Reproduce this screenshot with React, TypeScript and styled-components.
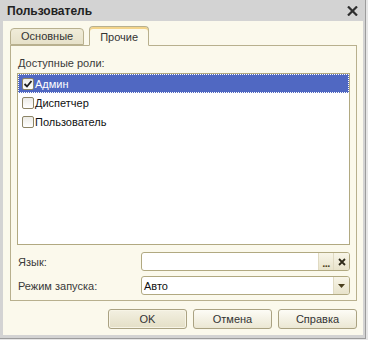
import React from 'react';
import styled, { createGlobalStyle } from 'styled-components';

const Global = createGlobalStyle`
  html, body { margin: 0; padding: 0; background: #ffffff; }
  body { font-family: "Liberation Sans", Arial, sans-serif; font-size: 11px; color: #222; }
`;

const Window = styled.div`
  width: 368px;
  height: 340px;
  box-sizing: border-box;
  display: flex;
  flex-direction: column;
  background: #d3d3d3;
  padding: 0 5px 5px 3px;
  box-shadow: inset -2px -1px 0 #e6e6e6, inset -3px -2px 0 #9c9c9c;
`;

const TitleBar = styled.div`
  height: 21px;
  flex: none;
  display: flex;
  align-items: center;
  justify-content: space-between;
  padding: 0 5px 0 4px;
`;

const Title = styled.span`
  font-weight: bold;
  font-size: 12px;
  color: #222;
`;

const Content = styled.div`
  flex: 1;
  min-height: 0;
  background: #fbf9ec;
  display: flex;
  flex-direction: column;
  padding: 5px 6px 6px 7px;
`;

const TabStrip = styled.div`
  height: 19px;
  flex: none;
  display: flex;
  align-items: flex-end;
  gap: 5px;
`;

const Tab = styled.div<{ $active?: boolean }>`
  box-sizing: border-box;
  height: ${p => (p.$active ? '20px' : '17px')};
  padding: 0 10px;
  display: flex;
  align-items: center;
  justify-content: center;
  border: 1px solid #b8b08e;
  border-bottom: ${p => (p.$active ? '1px solid #fbf9ec' : '1px solid #b8b08e')};
  border-radius: 4px 4px 0 0;
  background: ${p => (p.$active ? '#fbf9ec' : 'linear-gradient(#f0ecd9, #e6e1c9)')};
  box-shadow: ${p => (p.$active ? 'inset 0 2px 0 #f3d48a' : 'none')};
  color: #333;
  margin-bottom: ${p => (p.$active ? '-1px' : '0')};
  position: relative;
  z-index: ${p => (p.$active ? 1 : 0)};
  line-height: 1;
  padding-top: ${p => (p.$active ? '2px' : '0')};
`;

const Panel = styled.div`
  flex: 1;
  min-height: 0;
  border: 1px solid #b8b08e;
  display: flex;
  flex-direction: column;
  padding: 9px 6px 5px 6px;
`;

const SectionLabel = styled.div`
  line-height: 17px;
  color: #3a3a3a;
  padding-left: 1px;
`;

const List = styled.div`
  flex: 1;
  min-height: 0;
  margin-top: 1px;
  background: #ffffff;
  border: 1px solid #b1a981;
  display: flex;
  flex-direction: column;
`;

const Row = styled.div<{ $selected?: boolean }>`
  height: 19px;
  box-sizing: border-box;
  display: flex;
  align-items: center;
  gap: 1px;
  padding-left: 4px;
  background: ${p => (p.$selected ? '#5068c2' : 'transparent')};
  color: ${p => (p.$selected ? '#ffffff' : '#111111')};
  outline: ${p => (p.$selected ? '1px dotted #ffffff' : 'none')};
  outline-offset: -1px;
`;

const Box = styled.span`
  width: 12px;
  height: 12px;
  box-sizing: border-box;
  border: 1px solid #8c8466;
  border-radius: 2px;
  background: linear-gradient(#ecebe6, #ffffff);
  display: flex;
  align-items: center;
  justify-content: center;
  flex: none;
`;

const FormGrid = styled.div`
  margin-top: 7px;
  display: grid;
  grid-template-columns: 124px 1fr;
  row-gap: 5px;
  align-items: center;
`;

const FieldLabel = styled.span`
  color: #3a3a3a;
  padding-left: 1px;
`;

const Field = styled.div`
  height: 19px;
  box-sizing: border-box;
  border: 1px solid #b1a981;
  border-radius: 3px;
  background: #ffffff;
  display: flex;
  overflow: hidden;
`;

const FieldText = styled.span`
  flex: 1;
  padding-left: 2px;
  display: flex;
  align-items: center;
  color: #111;
`;

const FieldButton = styled.span<{ $w: number }>`
  width: ${p => p.$w}px;
  flex: none;
  display: flex;
  align-items: center;
  justify-content: center;
  background: linear-gradient(#f8f5e8, #e8e3cb);
  border-left: 1px solid #e0dac2;
  color: #4d4422;
`;

const Dots = styled.span`
  font-weight: bold;
  font-size: 11px;
  letter-spacing: -0.5px;
  line-height: 1;
  padding-top: 4px;
`;

const ButtonRow = styled.div`
  flex: none;
  margin-top: 8px;
  display: flex;
  justify-content: flex-end;
  gap: 6px;
`;

const Button = styled.button<{ $default?: boolean }>`
  width: 79px;
  height: 20px;
  box-sizing: border-box;
  border: 1px solid #aaa282;
  border-radius: 3px;
  background: ${p => (p.$default ? 'linear-gradient(#f3f0e1, #e4dfc6)' : 'linear-gradient(#fdfcf6, #ebe7d3)')};
  box-shadow: ${p => (p.$default ? 'inset 0 0 0 1px #f7f4e6' : 'none')};
  font-family: "Liberation Sans", Arial, sans-serif;
  font-size: 11px;
  color: #333;
  padding: 0;
`;

const CloseIcon = () => (
  <svg width="11" height="10" viewBox="0 0 11 10">
    <path d="M1 0.5 L10 9.5 M10 0.5 L1 9.5" stroke="#2e2e2e" strokeWidth="2.2" />
  </svg>
);

const Check = () => (
  <svg width="10" height="10" viewBox="0 0 10 10">
    <path d="M1.5 5 L4 7.5 L8.5 2" stroke="#1e1e1e" strokeWidth="1.8" fill="none" />
  </svg>
);

const Cross = () => (
  <svg width="8" height="8" viewBox="0 0 8 8">
    <path d="M1 1 L7 7 M7 1 L1 7" stroke="#2e2a1a" strokeWidth="1.8" />
  </svg>
);

const Arrow = () => (
  <svg width="7" height="4" viewBox="0 0 7 4">
    <polygon points="0,0 7,0 3.5,4" fill="#4a3f1e" />
  </svg>
);

const roles = [
  { name: 'Админ', checked: true },
  { name: 'Диспетчер', checked: false },
  { name: 'Пользователь', checked: false },
];

export default function App() {
  return (
    <>
      <Global />
      <Window>
        <TitleBar>
          <Title>Пользователь</Title>
          <CloseIcon />
        </TitleBar>
        <Content>
          <TabStrip>
            <Tab>Основные</Tab>
            <Tab $active>Прочие</Tab>
          </TabStrip>
          <Panel>
            <SectionLabel>Доступные роли:</SectionLabel>
            <List>
              {roles.map((r, i) => (
                <Row key={r.name} $selected={i === 0}>
                  <Box>{r.checked && <Check />}</Box>
                  <span>{r.name}</span>
                </Row>
              ))}
            </List>
            <FormGrid>
              <FieldLabel>Язык:</FieldLabel>
              <Field>
                <FieldText />
                <FieldButton $w={14}><Dots>...</Dots></FieldButton>
                <FieldButton $w={15}><Cross /></FieldButton>
              </Field>
              <FieldLabel>Режим запуска:</FieldLabel>
              <Field>
                <FieldText>Авто</FieldText>
                <FieldButton $w={15}><Arrow /></FieldButton>
              </Field>
            </FormGrid>
          </Panel>
          <ButtonRow>
            <Button $default>OK</Button>
            <Button>Отмена</Button>
            <Button>Справка</Button>
          </ButtonRow>
        </Content>
      </Window>
    </>
  );
}
